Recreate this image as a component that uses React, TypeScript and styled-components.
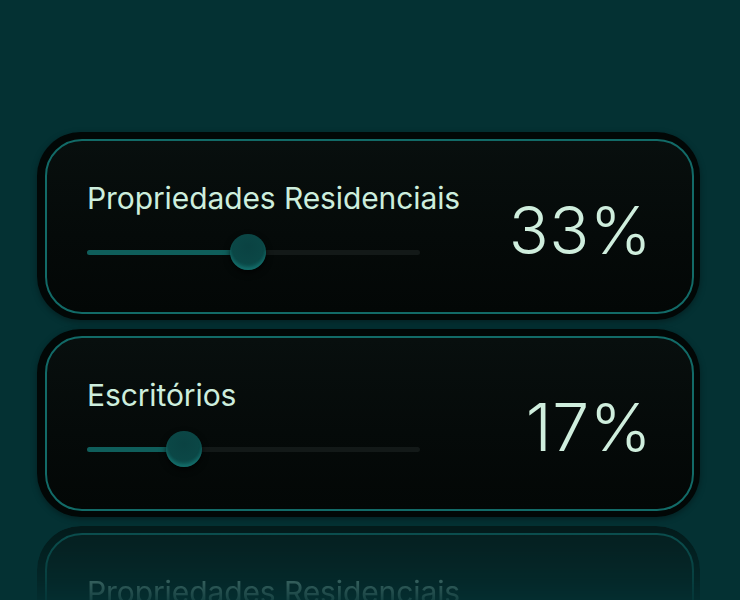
import React from 'react';
import styled, { createGlobalStyle } from 'styled-components';

const GlobalStyle = createGlobalStyle`
  html, body {
    margin: 0;
    padding: 0;
    height: 100%;
    background: #043133;
    overflow: hidden;
  }
  * {
    box-sizing: border-box;
  }
`;

interface Share {
  label: string;
  value: number;
  pos: number;
}

const shares: Share[] = [
  { label: 'Propriedades Residenciais', value: 33, pos: 48.3 },
  { label: 'Escritórios', value: 17, pos: 29 },
  { label: 'Propriedades Residenciais', value: 33, pos: 48.3 },
];

const App = () => {
  return (
    <>
      <GlobalStyle />
      <Page>
        {shares.map((s, i) => (
          <ShareCard
            key={i}
            share={s}
            faded={i === shares.length - 1}
          />
        ))}
      </Page>
    </>
  );
};

interface ShareCardProps {
  share: Share;
  faded?: boolean;
}

const ShareCard: React.FC<ShareCardProps> = (props) => {
  const { share, faded } = props;

  return (
    <Outer $faded={faded}>
      <Inner>
        <Left>
          <Label>{share.label}</Label>
          <Slider>
            <Track />
            <Fill style={{ width: `${share.pos}%` }} />
            <Thumb style={{ left: `calc(${share.pos}% - 18px)` }} />
          </Slider>
        </Left>
        <Percent>{share.value}%</Percent>
      </Inner>
    </Outer>
  );
};

const Page = styled.div`
  width: 740px;
  height: 600px;
  overflow: hidden;
  padding: 132px 40px 0 37px;
  display: flex;
  flex-direction: column;
  gap: 9px;
  font-family: Inter, 'Noto Sans', sans-serif;
`;

const Outer = styled.div<{ $faded?: boolean }>`
  flex: none;
  height: 188px;
  border-radius: 44px;
  padding: 7px 6px 6px 8px;
  background: #020706;
  box-shadow: 0 2px 6px rgba(0, 0, 0, 0.35);
  ${({ $faded }) =>
    $faded &&
    `
    opacity: 0.6;
    -webkit-mask-image: linear-gradient(180deg, rgba(0,0,0,0.9) 0px, rgba(0,0,0,0.4) 55px, rgba(0,0,0,0) 85px);
    mask-image: linear-gradient(180deg, rgba(0,0,0,0.9) 0px, rgba(0,0,0,0.4) 55px, rgba(0,0,0,0) 85px);
  `}
`;

const Inner = styled.div`
  height: 100%;
  border: 2px solid #126a67;
  border-radius: 37px;
  background: linear-gradient(180deg, #080f0e 0%, #050a09 55%, #030706 100%);
  padding: 40px 40px 0 40px;
  display: flex;
  justify-content: space-between;
`;

const Left = styled.div`
  width: 333px;
  display: flex;
  flex-direction: column;
`;

const Label = styled.div`
  font-size: 30px;
  line-height: 34px;
  font-weight: 400;
  color: #cdeedd;
  white-space: nowrap;
  letter-spacing: -0.1px;
`;

const Slider = styled.div`
  position: relative;
  margin-top: 19px;
  height: 36px;
`;

const Track = styled.div`
  position: absolute;
  left: 0;
  right: 0;
  top: 16px;
  height: 5px;
  border-radius: 3px;
  background: #131918;
`;

const Fill = styled.div`
  position: absolute;
  left: 0;
  top: 16px;
  height: 5px;
  border-radius: 3px;
  background: #0f5e5b;
`;

const Thumb = styled.div`
  position: absolute;
  top: 0;
  width: 36px;
  height: 36px;
  border-radius: 50%;
  background: radial-gradient(circle at 50% 36%, #0a4242 0%, #0b4746 55%, #137370 100%);
  box-shadow: 0 3px 6px rgba(0, 0, 0, 0.7), inset 0 -3px 3px rgba(30, 140, 135, 0.35);
`;

const Percent = styled.div`
  align-self: center;
  margin-top: -34px;
  font-size: 66px;
  line-height: 70px;
  font-weight: 300;
  letter-spacing: 0.5px;
  color: #cfeedd;
`;

export default App;
